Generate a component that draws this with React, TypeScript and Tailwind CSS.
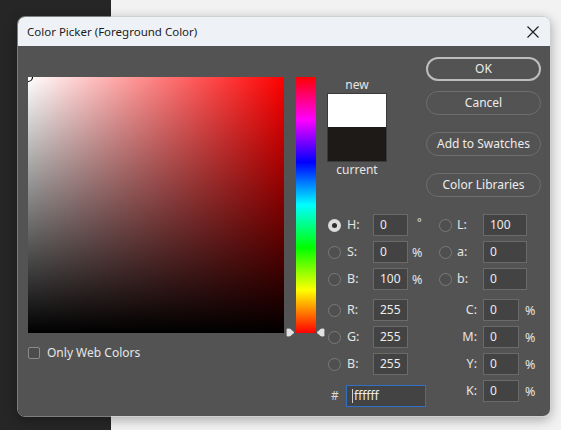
import React from "react"

const FONT = { fontFamily: '"Segoe UI", "Noto Sans", "Open Sans", sans-serif' }

function Radio({ checked = false }: { checked?: boolean }) {
  return checked ? (
    <div className="w-[13px] h-[13px] rounded-full bg-[#dcdcdc] flex items-center justify-center">
      <div className="w-[5px] h-[5px] rounded-full bg-[#2e2e2e]"></div>
    </div>
  ) : (
    <div className="w-[13px] h-[13px] rounded-full border border-[#7a7a7a] bg-[#4f4f4f]"></div>
  )
}

function Field({ value, width, active = false }: { value: string; width: string; active?: boolean }) {
  return (
    <div
      className={`${width} h-[22px] flex items-center pl-[6px] bg-[#434343] border ${
        active ? "border-[#2f6fc4]" : "border-[#6a6a6a]"
      } text-[12px] text-[#ececec]`}
    >
      {active && <span className="w-px h-[14px] bg-[#d0d0d0] -ml-[1px] mr-[1px]"></span>}
      {value}
    </div>
  )
}

function LeftPart({ label, value, unit, checked }: { label: string; value: string; unit?: string; checked?: boolean }) {
  return (
    <div className="flex items-center w-[110px] h-[22px]">
      <div className="w-[20px] pl-[1px]">
        <Radio checked={checked} />
      </div>
      <div className="w-[26px] text-[12.5px] text-[#e4e4e4]">{label}</div>
      <Field value={value} width="w-[35px]" />
      {unit === "°" && <div className="pl-[9px] text-[11px] text-[#e4e4e4] -mt-[6px]">°</div>}
      {unit === "%" && <div className="pl-[4px] text-[12.5px] text-[#e4e4e4] mt-[2px]">%</div>}
    </div>
  )
}

function LabPart({ label, value }: { label: string; value: string }) {
  return (
    <div className="flex items-center h-[22px]">
      <div className="w-[20px] pl-[2px]">
        <Radio />
      </div>
      <div className="w-[26px] text-[12.5px] text-[#e4e4e4]">{label}</div>
      <Field value={value} width="w-[44px]" />
    </div>
  )
}

function CmykPart({ label, value }: { label: string; value: string }) {
  return (
    <div className="flex items-center h-[22px]">
      <div className="w-[40px] text-right text-[12.5px] text-[#e4e4e4]">{label}</div>
      <Field value={value} width="w-[36px] ml-[6px]" />
      <div className="pl-[6px] text-[12.5px] text-[#e4e4e4] mt-[2px]">%</div>
    </div>
  )
}

function Button({ label, primary = false, className = "" }: { label: string; primary?: boolean; className?: string }) {
  return (
    <div
      className={`w-[115px] h-[24px] rounded-full flex items-center justify-center text-[12px] text-[#ececec] ${
        primary ? "border-2 border-[#bdbdbd]" : "border border-[#6e6e6e]"
      } ${className}`}
    >
      {label}
    </div>
  )
}

export default function App() {
  return (
    <div className="relative w-[561px] h-[430px] flex overflow-hidden" style={FONT}>
      <div className="w-[111px] h-full bg-[#262626]"></div>
      <div className="flex-1 h-full bg-[#f2f2f2]"></div>

      {/* Dialog window */}
      <div className="absolute left-[17px] top-[16px] w-[534px] h-[401px] rounded-[8px] overflow-hidden border border-[#b9b9b9]/60 shadow-[0_3px_12px_rgba(0,0,0,0.3)] flex flex-col">
        <div className="h-[29px] bg-[#eef2f7] flex items-center justify-between pl-[9px] pr-[8px]">
          <span className="text-[11.5px] text-[#1b1b1b]">Color Picker (Foreground Color)</span>
          <svg width="14" height="14" viewBox="0 0 14 14" className="mr-[2px]">
            <path d="M1.5 1.5 L12.5 12.5 M12.5 1.5 L1.5 12.5" stroke="#1b1b1b" strokeWidth="1.1" />
          </svg>
        </div>

        <div className="flex-1 bg-[#535353] flex pl-[10px] pt-[11px]">
          {/* Color field */}
          <div className="flex flex-col pt-[20px]">
            <div className="relative w-[256px] h-[256px] overflow-hidden bg-linear-to-r/srgb from-white to-[#ff0000]">
              <div className="absolute inset-0 bg-linear-to-t/srgb from-black to-[rgba(0,0,0,0)]"></div>
              <svg className="absolute -left-[6px] -top-[6px]" width="12" height="12" viewBox="0 0 12 12">
                <circle cx="6" cy="6" r="4.5" fill="none" stroke="#000" strokeWidth="1.2" />
              </svg>
            </div>
            <div className="flex items-center mt-[11px]">
              <div className="w-[12px] h-[12px] rounded-[2px] border border-[#8a8a8a] bg-[#4c4c4c]"></div>
              <span className="ml-[7px] text-[12px] text-[#e6e6e6]">Only Web Colors</span>
            </div>
          </div>

          {/* Hue slider */}
          <div className="relative ml-[12px] pt-[20px] w-[20px]">
            <div className="w-[20px] h-[256px] bg-[linear-gradient(to_bottom,#ff0000,#ff00ff_16.7%,#0000ff_33.3%,#00ffff_50%,#00ff00_66.7%,#ffff00_83.3%,#ff0000)]"></div>
            <svg className="absolute -left-[10px] top-[271px]" width="9" height="9" viewBox="0 0 9 9">
              <path d="M1 1 H4 L8 4.5 L4 8 H1 Z" fill="#e2e2e2" stroke="#e2e2e2" strokeWidth="0.8" strokeLinejoin="round" />
            </svg>
            <svg className="absolute left-[20px] top-[271px]" width="9" height="9" viewBox="0 0 9 9">
              <path d="M8 1 H5 L1 4.5 L5 8 H8 Z" fill="#e2e2e2" stroke="#e2e2e2" strokeWidth="0.8" strokeLinejoin="round" />
            </svg>
          </div>

          {/* Right area */}
          <div className="ml-[11px] flex flex-col">
            <div className="flex">
              <div className="w-[60px] mt-[20px] flex flex-col items-center">
                <span className="h-[16px] leading-[16px] text-[12px] text-[#e6e6e6]">new</span>
                <div className="w-[60px] h-[69px] border border-[#3a3a3a] flex flex-col">
                  <div className="h-[33px] bg-white"></div>
                  <div className="flex-1 bg-[#1e1a17]"></div>
                </div>
                <span className="h-[16px] leading-[16px] text-[12px] text-[#e6e6e6]">current</span>
              </div>
              <div className="ml-[39px] flex flex-col">
                <Button label="OK" primary />
                <Button label="Cancel" className="mt-[10px]" />
                <Button label="Add to Swatches" className="mt-[17px]" />
                <Button label="Color Libraries" className="mt-[17px]" />
              </div>
            </div>

            <div className="mt-[17px] flex flex-col">
              <div className="flex">
                <LeftPart label="H:" value="0" unit="°" checked />
                <LabPart label="L:" value="100" />
              </div>
              <div className="flex mt-[5px]">
                <LeftPart label="S:" value="0" unit="%" />
                <LabPart label="a:" value="0" />
              </div>
              <div className="flex mt-[5px]">
                <LeftPart label="B:" value="100" unit="%" />
                <LabPart label="b:" value="0" />
              </div>
              <div className="flex mt-[9px]">
                <LeftPart label="R:" value="255" />
                <CmykPart label="C:" value="0" />
              </div>
              <div className="flex mt-[5px]">
                <LeftPart label="G:" value="255" />
                <CmykPart label="M:" value="0" />
              </div>
              <div className="flex mt-[5px]">
                <LeftPart label="B:" value="255" />
                <CmykPart label="Y:" value="0" />
              </div>
              <div className="flex mt-[5px] items-start">
                <div className="w-[110px] flex items-center mt-[5px]">
                  <div className="w-[19px] pl-[4px] text-[12px] text-[#d8d8d8]">#</div>
                  <Field value="ffffff" width="w-[80px]" active />
                </div>
                <CmykPart label="K:" value="0" />
              </div>
            </div>
          </div>
        </div>
      </div>
    </div>
  )
}
